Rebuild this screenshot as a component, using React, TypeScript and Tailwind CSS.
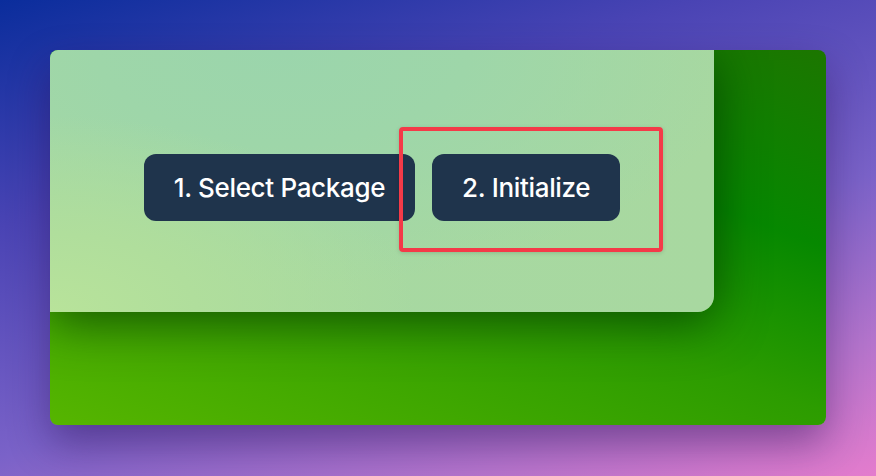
export default function App() {
  return (
    <div className="w-[876px] h-[476px] overflow-hidden bg-[linear-gradient(162deg,#0a2d9c_0%,#4a44b4_30%,#7a62c8_60%,#b474cc_82%,#e47ccd_100%)] pt-[50px] pl-[50px] font-['Inter',sans-serif]">
      {/* Window */}
      <div className="relative w-[776px] h-[375px] rounded-lg overflow-hidden shadow-[0_18px_40px_rgba(40,10,80,0.45)] bg-[linear-gradient(20deg,#56b500_0%,#2c9c00_45%,#068800_70%,#1c7600_100%)]">
        {/* Light panel */}
        <div className="w-[664px] h-[262px] rounded-br-2xl bg-[radial-gradient(ellipse_55%_75%_at_0%_100%,#b8e39a_0%,#b0de9c_40%,transparent_100%),radial-gradient(ellipse_70%_90%_at_35%_0%,#9bd5ac_0%,#9ed6a9_40%,transparent_100%),linear-gradient(90deg,#a6d9a2,#a8d8a0)] shadow-[0_10px_50px_rgba(0,50,0,0.7)] flex items-center justify-center gap-[17px] pt-[13px]">
          <button className="h-[67px] px-[30px] rounded-xl bg-[#1f344c] text-white text-[26px] font-medium tracking-[-0.33px]">
            1. Select Package
          </button>
          <button className="h-[67px] px-[30px] rounded-xl bg-[#1f344c] text-white text-[26px] font-medium tracking-[-0.33px]">
            2. Initialize
          </button>
        </div>
        {/* Annotation */}
        <div className="absolute left-[349px] top-[77px] w-[264px] h-[125px] border-4 border-[#f43a48] rounded-sm shadow-[0_1px_4px_rgba(0,0,0,0.15)]" />
      </div>
    </div>
  );
}
